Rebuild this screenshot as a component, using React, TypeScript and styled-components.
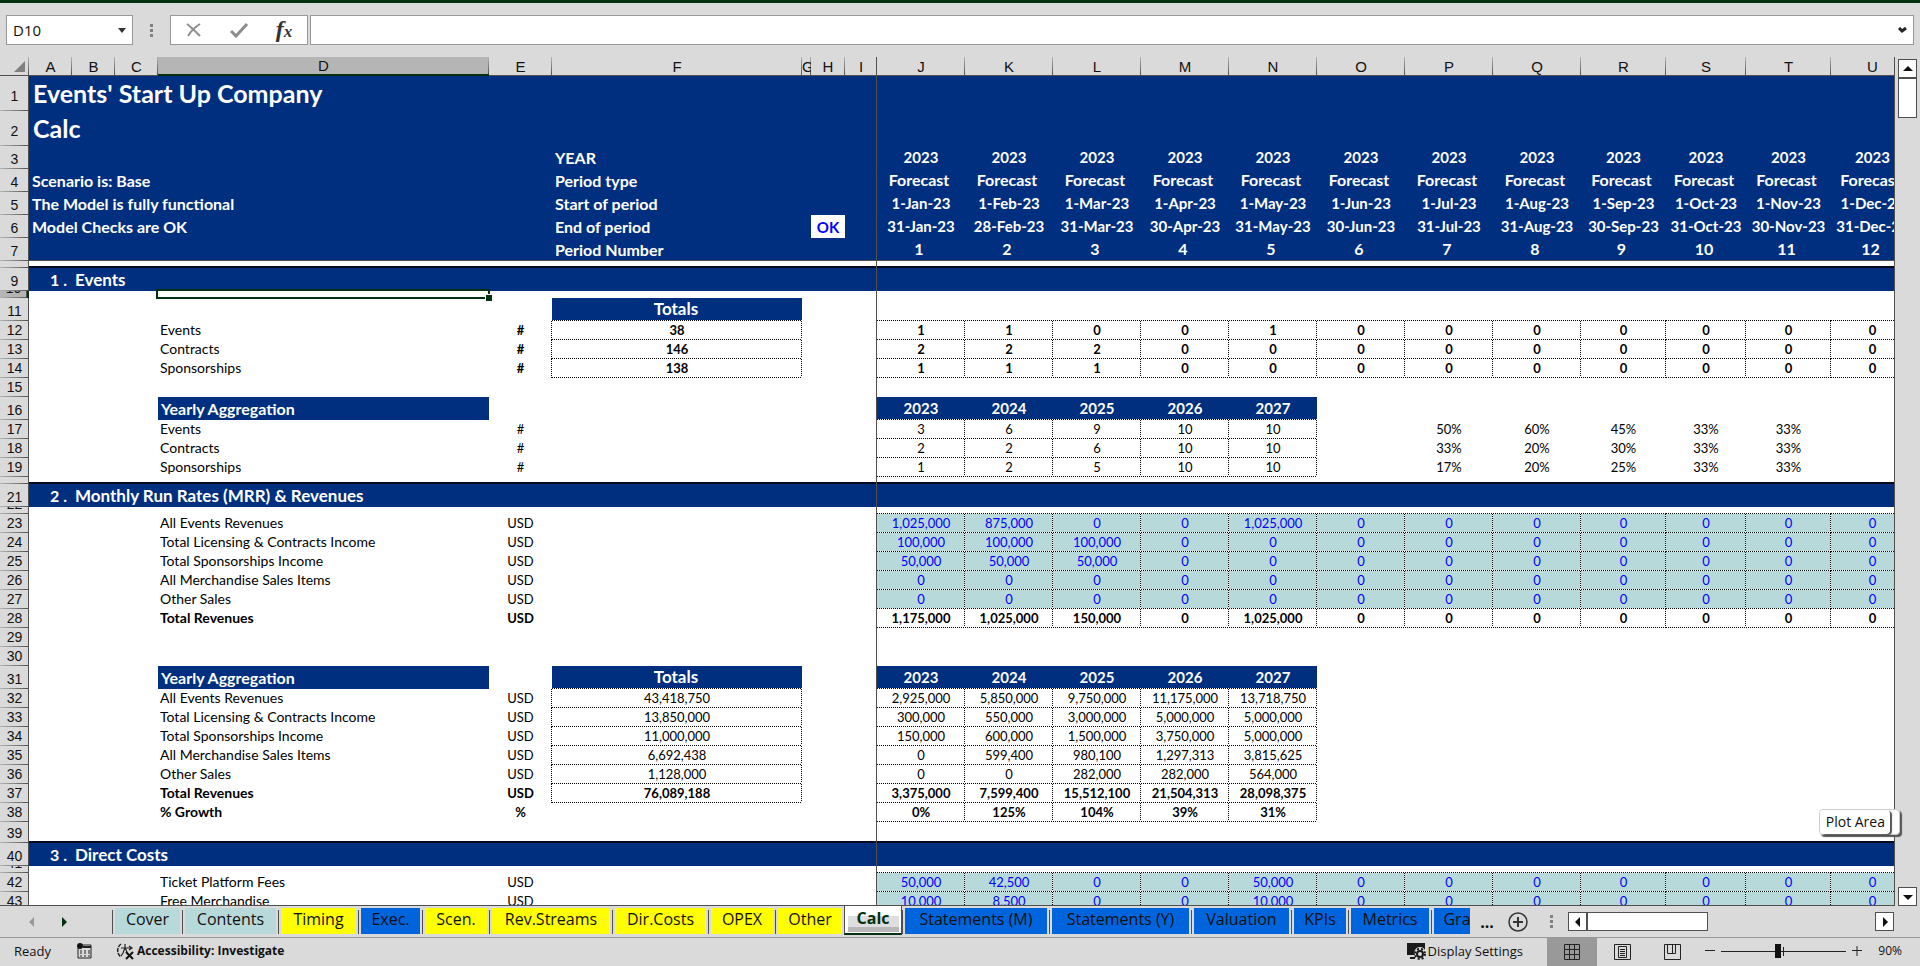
import React from 'react';
import styled, { createGlobalStyle, css } from 'styled-components';

const NAVY = '#002f7f';
const TEAL = '#b8d9da';
const CHROME = '#dadada';
const GREEN = '#03300f';
const LINE = '#505050';
const SHEET_FONT = 'Lato, "Liberation Sans", sans-serif';
const UI_FONT = '"Open Sans", "Noto Sans", sans-serif';

const GlobalStyle = createGlobalStyle`
  *, *::before, *::after { box-sizing: border-box; }
  html, body { margin: 0; background: ${CHROME}; }
  button, input { font: inherit; color: inherit; margin: 0; }
`;

const Shell = styled.div`
  display: flex;
  flex-direction: column;
  height: 100vh;
  overflow: hidden;
  border-top: 3px solid ${GREEN};
  background: ${CHROME};
  color: #111;
  font-family: ${UI_FONT};
`;

/* ---------- formula bar ---------- */

const FormulaBar = styled.div`
  display: flex;
  align-items: center;
  height: 54px;
  flex: none;
  padding: 0 6px;
`;

const fieldBox = css`
  height: 30px;
  border: 1px solid #999;
  background: #fff;
`;

const NameBox = styled.div`
  ${fieldBox}
  display: flex;
  align-items: center;
  width: 127px;
`;

const NameInput = styled.input`
  flex: 1;
  min-width: 0;
  border: 0;
  padding: 0 6px;
  background: none;
  outline: 0;
  font-size: 15px;
`;

const PlainButton = styled.button`
  display: flex;
  align-items: center;
  justify-content: center;
  border: 0;
  padding: 0;
  background: none;
`;

const NameArrow = styled(PlainButton)`
  width: 20px;
  height: 28px;
`;

const Grip = styled.div<{ $width: number }>`
  display: flex;
  flex-direction: column;
  align-items: center;
  align-self: center;
  gap: 2px;
  width: ${(p) => p.$width}px;
  flex: none;
  &::before, &::after { content: ''; }
  &::before, &::after, & > i {
    width: 3px;
    height: 3px;
    background: #808080;
  }
`;

const ActionBox = styled.div`
  ${fieldBox}
  display: flex;
  justify-content: space-evenly;
  width: 138px;
  margin-right: 2px;
`;

const ActionButton = styled(PlainButton)`
  width: 44px;
`;

const FxText = styled.span`
  font: italic bold 24px/26px "Liberation Serif", serif;
  color: #333;
  small { font-size: 17px; }
`;

const FormulaField = styled.div`
  ${fieldBox}
  display: flex;
  flex: 1;
`;

const FormulaInput = styled.input`
  flex: 1;
  border: 0;
  outline: 0;
  padding: 0 6px;
  font-size: 15px;
  background: none;
`;

const ExpandButton = styled(PlainButton)`
  width: 22px;
`;

/* ---------- sheet ---------- */

const Workspace = styled.main`
  position: relative;
  display: flex;
  flex: 1;
  min-height: 0;
`;

const Viewport = styled.div`
  flex: 1;
  min-width: 0;
  overflow: hidden;
  border-right: 1px solid ${LINE};
  border-bottom: 1px solid ${LINE};
  background: #fff;
`;

const Grid = styled.table<{ $width: number }>`
  width: ${(p) => p.$width}px;
  table-layout: fixed;
  border-collapse: separate;
  border-spacing: 0;
  font-family: ${SHEET_FONT};
  td, th { padding: 0; }
`;

const ColumnHead = styled.th<{ $active?: boolean; $freeze?: boolean }>`
  height: 19px;
  overflow: hidden;
  border-bottom: ${(p) => (p.$active ? `2px solid ${GREEN}` : `1px solid ${LINE}`)};
  background:
    linear-gradient(${(p) => (p.$freeze ? LINE : '#b4b4b4')}, ${LINE}) right / 1px 100% no-repeat,
    ${(p) => (p.$active ? '#b5b5b5' : CHROME)};
  font: 15px/17px "Liberation Sans", Arial, sans-serif;
  color: #111;
`;

const Corner = styled.th`
  border-bottom: 1px solid ${LINE};
  background: linear-gradient(#b4b4b4, ${LINE}) right / 1px 100% no-repeat, ${CHROME};
  svg { display: block; margin-left: 14px; }
`;

const RowHead = styled.th<{ $active?: boolean }>`
  background:
    linear-gradient(${LINE}, ${LINE}) right / 1px 100% no-repeat,
    linear-gradient(90deg, #b4b4b4, ${LINE}) bottom / 100% 1px no-repeat,
    ${(p) => (p.$active ? '#b5b5b5' : CHROME)};
  ${(p) => p.$active && `border-right: 2px solid ${GREEN};`}
  color: #111;
  font: 14px/14px "Liberation Sans", Arial, sans-serif;
`;

const RowHeadText = styled.div<{ $h: number }>`
  display: flex;
  align-items: flex-end;
  justify-content: center;
  height: ${(p) => p.$h}px;
  padding-bottom: ${(p) => (p.$h > 30 ? 8 : 3)}px;
  overflow: hidden;
`;

type Kind =
  | 'blank' | 'label' | 'labelBold' | 'mid' | 'midBold'
  | 'input' | 'band' | 'totals' | 'bandLabel' | 'title' | 'head' | 'headMid'
  | 'headShift' | 'sectionNo' | 'section' | 'check' | 'selected';

const small = css`
  padding-bottom: 1px;
  font-size: 13px;
`;
const strong = css`
  font-weight: bold;
  color: #fff;
`;

const kinds: Record<Kind, ReturnType<typeof css>> = {
  blank: css``,
  label: css`padding: 0 0 1px 2px; font-size: 14px;`,
  labelBold: css`padding: 0 0 1px 2px; font-size: 14px; font-weight: bold;`,
  mid: css`${small} justify-content: center;`,
  midBold: css`${small} justify-content: center; font-weight: bold;`,
  input: css`${small} justify-content: center; color: #00f;`,
  band: css`${strong} justify-content: center; font-size: 15px; padding-bottom: 3px;`,
  totals: css`${strong} justify-content: center; font-size: 17px; padding: 0 2px 3px 0;`,
  bandLabel: css`${strong} padding-left: 3px; font-size: 16px;`,
  title: css`${strong} padding: 0 0 4px 4px; font-size: 25px; line-height: 28px;`,
  head: css`${strong} padding-left: 3px; font-size: 16px;`,
  headMid: css`${strong} justify-content: center; font-size: 15px; padding-bottom: 3px;`,
  headShift: css`${strong} justify-content: center; font-size: 16px; padding: 0 4px 3px 0;`,
  sectionNo: css`${strong} justify-content: flex-end; padding-right: 5px; font-size: 16px;`,
  section: css`${strong} padding-left: 3px; font-size: 17px;`,
  check: css`justify-content: center; font-size: 15px; font-weight: bold; color: #00f;`,
  selected: css``,
};

const CellText = styled.div<{ $kind: Kind; $h: number }>`
  display: flex;
  align-items: flex-end;
  height: ${(p) => p.$h}px;
  padding-bottom: 2px;
  line-height: 18px;
  white-space: pre;
  color: #000;
  ${(p) => kinds[p.$kind]}
`;

interface CellLook {
  $fill?: string;
  $dots?: string;
  $rule?: boolean;
  $freeze?: boolean;
  $split?: boolean;
  $selected?: boolean;
}

const layers = (p: CellLook) => {
  const list: string[] = [];
  if (p.$freeze) list.push(`linear-gradient(${LINE}, ${LINE}) right / 1px 100% no-repeat`);
  if (p.$split) list.push(`linear-gradient(${LINE}, ${LINE}) bottom / 100% 1px no-repeat`);
  if (p.$rule) list.push('linear-gradient(#000a1c, #000a1c) bottom / 100% 2px no-repeat');
  if (p.$dots?.includes('b'))
    list.push('repeating-linear-gradient(90deg, #000 0 1px, #fff 1px 2px) bottom / 100% 1px no-repeat');
  if (p.$dots?.includes('r'))
    list.push('repeating-linear-gradient(#000 0 1px, #fff 1px 2px) right / 1px 100% no-repeat');
  list.push(p.$fill ?? '#fff');
  return list.join(', ');
};

const Cell = styled.td<CellLook>`
  background: ${layers};
  ${(p) =>
    p.$selected &&
    css`
      position: relative;
      &::before {
        content: '';
        position: absolute;
        inset: -2px -1px -1px -2px;
        border: 2px solid ${GREEN};
      }
      &::after {
        content: '';
        position: absolute;
        right: -3px;
        bottom: -3px;
        width: 7px;
        height: 7px;
        border: solid #fff;
        border-width: 1px 0 0 1px;
        background: ${GREEN};
      }
    `}
`;

const COLS: [string, number][] = [
  ['A', 43], ['B', 43], ['C', 43], ['D', 331], ['E', 63], ['F', 250], ['G', 9],
  ['H', 34], ['I', 32], ['J', 88], ['K', 88], ['L', 88], ['M', 88], ['N', 88],
  ['O', 88], ['P', 88], ['Q', 88], ['R', 85], ['S', 80], ['T', 85], ['U', 83],
];
const MONTHS = 'JKLMNOPQRSTU'.split('');
const YEARS = MONTHS.slice(0, 5);

interface CellSpec {
  t?: string;
  kind?: Kind;
  span?: number;
  fill?: string;
  dots?: string;
}
type Cells = Record<string, CellSpec>;

interface RowSpec {
  n: number;
  h: number;
  fill?: string;
  rule?: boolean;
  split?: boolean;
  hideNo?: boolean;
  cells?: Cells;
}

const across = (cols: string[], values: string[], spec: CellSpec): Cells =>
  Object.fromEntries(cols.map((c, i) => [c, { ...spec, t: values[i] ?? '' }]));

const months = (values: string, spec: CellSpec) => {
  const list = values.split(' ');
  while (list.length < 12) list.push('0');
  return across(MONTHS, list, spec);
};

const line = (name: string, unit: string, bold = false, unitBold = bold): Cells => ({
  D: { t: name, kind: bold ? 'labelBold' : 'label' },
  E: { t: unit, kind: unitBold ? 'midBold' : 'mid' },
});

const total = (row: Cells, value: string, bold = false): Cells => ({
  ...row,
  E: { ...row.E, dots: 'r' },
  F: { t: value, kind: bold ? 'midBold' : 'mid', dots: 'rb' },
});

const years = (values: string, bold = false) =>
  across(YEARS, values.split(' '), { kind: bold ? 'midBold' : 'mid', dots: 'rb' });

const section = (no: string, name: string): Cells => ({
  A: { t: `${no} .`, kind: 'sectionNo' },
  B: { t: name, kind: 'section', span: 8 },
});

const yearBand = across(YEARS, ['2023', '2024', '2025', '2026', '2027'], { kind: 'band', fill: NAVY, dots: 'b' });
const yearly: CellSpec = { t: 'Yearly Aggregation', kind: 'bandLabel', fill: NAVY };
const totals: CellSpec = { t: 'Totals', kind: 'totals', fill: NAVY, dots: 'b' };
const openTop = across(MONTHS, [], { dots: 'b' });
const white: CellSpec = { kind: 'headMid' };
const inputCell: CellSpec = { kind: 'input', fill: TEAL, dots: 'rb' };
const boldCell: CellSpec = { kind: 'midBold', dots: 'rb' };
const shares = (values: string) => across(['P', 'Q', 'R', 'S', 'T'], values.split(' '), { kind: 'mid' });

const names = ['Jan', 'Feb', 'Mar', 'Apr', 'May', 'Jun', 'Jul', 'Aug', 'Sep', 'Oct', 'Nov', 'Dec'];
const ends = [31, 28, 31, 30, 31, 30, 31, 31, 30, 31, 30, 31];

const ROWS: RowSpec[] = [
  { n: 1, h: 35, fill: NAVY, cells: { A: { t: "Events' Start Up Company", kind: 'title', span: 5 } } },
  { n: 2, h: 35, fill: NAVY, cells: { A: { t: 'Calc', kind: 'title', span: 5 } } },
  {
    n: 3, h: 23, fill: NAVY,
    cells: { F: { t: 'YEAR', kind: 'head' }, ...across(MONTHS, MONTHS.map(() => '2023'), white) },
  },
  {
    n: 4, h: 23, fill: NAVY,
    cells: {
      A: { t: 'Scenario is: Base', kind: 'head', span: 5 },
      F: { t: 'Period type', kind: 'head' },
      ...across(MONTHS, MONTHS.map(() => 'Forecast'), { kind: 'headShift' }),
    },
  },
  {
    n: 5, h: 23, fill: NAVY,
    cells: {
      A: { t: 'The Model is fully functional', kind: 'head', span: 5 },
      F: { t: 'Start of period', kind: 'head' },
      ...across(MONTHS, names.map((m) => `1-${m}-23`), white),
    },
  },
  {
    n: 6, h: 23, fill: NAVY,
    cells: {
      A: { t: 'Model Checks are OK', kind: 'head', span: 5 },
      F: { t: 'End of period', kind: 'head' },
      H: { t: 'OK', kind: 'check', fill: '#fff' },
      ...across(MONTHS, names.map((m, i) => `${ends[i]}-${m}-23`), white),
    },
  },
  {
    n: 7, h: 23, fill: NAVY, split: true,
    cells: {
      F: { t: 'Period Number', kind: 'head' },
      ...across(MONTHS, names.map((_, i) => `${i + 1}`), { kind: 'headShift' }),
    },
  },
  { n: 8, h: 7, rule: true, hideNo: true },
  { n: 9, h: 23, fill: NAVY, cells: section('1', 'Events') },
  { n: 10, h: 7, cells: { D: { kind: 'selected' } } },
  { n: 11, h: 23, cells: { F: totals, ...openTop } },
  { n: 12, h: 19, cells: { ...total(line('Events', '#', false, true), '38', true), ...months('1 1 0 0 1', boldCell) } },
  { n: 13, h: 19, cells: { ...total(line('Contracts', '#', false, true), '146', true), ...months('2 2 2', boldCell) } },
  { n: 14, h: 19, cells: { ...total(line('Sponsorships', '#', false, true), '138', true), ...months('1 1 1', boldCell) } },
  { n: 15, h: 19 },
  { n: 16, h: 23, cells: { D: yearly, ...yearBand } },
  { n: 17, h: 19, cells: { ...line('Events', '#'), ...years('3 6 9 10 10'), ...shares('50% 60% 45% 33% 33%') } },
  { n: 18, h: 19, cells: { ...line('Contracts', '#'), ...years('2 2 6 10 10'), ...shares('33% 20% 30% 33% 33%') } },
  { n: 19, h: 19, cells: { ...line('Sponsorships', '#'), ...years('1 2 5 10 10'), ...shares('17% 20% 25% 33% 33%') } },
  { n: 20, h: 7, rule: true, hideNo: true },
  { n: 21, h: 23, fill: NAVY, cells: section('2', 'Monthly Run Rates (MRR) & Revenues') },
  { n: 22, h: 7, cells: openTop },
  { n: 23, h: 19, cells: { ...line('All Events Revenues', 'USD'), ...months('1,025,000 875,000 0 0 1,025,000', inputCell) } },
  { n: 24, h: 19, cells: { ...line('Total Licensing & Contracts Income', 'USD'), ...months('100,000 100,000 100,000', inputCell) } },
  { n: 25, h: 19, cells: { ...line('Total Sponsorships Income', 'USD'), ...months('50,000 50,000 50,000', inputCell) } },
  { n: 26, h: 19, cells: { ...line('All Merchandise Sales Items', 'USD'), ...months('0', inputCell) } },
  { n: 27, h: 19, cells: { ...line('Other Sales', 'USD'), ...months('0', inputCell) } },
  { n: 28, h: 19, cells: { ...line('Total Revenues', 'USD', true), ...months('1,175,000 1,025,000 150,000 0 1,025,000', boldCell) } },
  { n: 29, h: 19 },
  { n: 30, h: 19 },
  { n: 31, h: 23, cells: { D: yearly, F: totals, ...yearBand } },
  { n: 32, h: 19, cells: { ...total(line('All Events Revenues', 'USD'), '43,418,750'), ...years('2,925,000 5,850,000 9,750,000 11,175,000 13,718,750') } },
  { n: 33, h: 19, cells: { ...total(line('Total Licensing & Contracts Income', 'USD'), '13,850,000'), ...years('300,000 550,000 3,000,000 5,000,000 5,000,000') } },
  { n: 34, h: 19, cells: { ...total(line('Total Sponsorships Income', 'USD'), '11,000,000'), ...years('150,000 600,000 1,500,000 3,750,000 5,000,000') } },
  { n: 35, h: 19, cells: { ...total(line('All Merchandise Sales Items', 'USD'), '6,692,438'), ...years('0 599,400 980,100 1,297,313 3,815,625') } },
  { n: 36, h: 19, cells: { ...total(line('Other Sales', 'USD'), '1,128,000'), ...years('0 0 282,000 282,000 564,000') } },
  { n: 37, h: 19, cells: { ...total(line('Total Revenues', 'USD', true), '76,089,188', true), ...years('3,375,000 7,599,400 15,512,100 21,504,313 28,098,375', true) } },
  { n: 38, h: 19, cells: { ...line('% Growth', '%', true), ...years('0% 125% 104% 39% 31%', true) } },
  { n: 39, h: 21, rule: true },
  { n: 40, h: 23, fill: NAVY, cells: section('3', 'Direct Costs') },
  { n: 41, h: 7, cells: openTop },
  { n: 42, h: 19, cells: { ...line('Ticket Platform Fees', 'USD'), ...months('50,000 42,500 0 0 50,000', inputCell) } },
  { n: 43, h: 19, cells: { ...line('Free Merchandise', 'USD'), ...months('10,000 8,500 0 0 10,000', inputCell) } },
];

function SheetRow({ row }: { row: RowSpec }) {
  const cells: React.ReactNode[] = [];
  for (let i = 0; i < COLS.length; ) {
    const col = COLS[i][0];
    const spec = row.cells?.[col] ?? {};
    const span = spec.span ?? 1;
    const last = COLS[i + span - 1][0];
    cells.push(
      <Cell
        key={col}
        colSpan={span}
        $fill={spec.fill ?? row.fill}
        $dots={spec.dots}
        $rule={row.rule}
        $split={row.split}
        $freeze={last === 'I'}
        $selected={spec.kind === 'selected'}
      >
        {spec.t ? <CellText $kind={spec.kind ?? 'blank'} $h={row.h}>{spec.t}</CellText> : null}
      </Cell>,
    );
    i += span;
  }
  return (
    <tr>
      <RowHead scope="row" $active={row.n === 10}>
        <RowHeadText $h={row.h}>{row.hideNo ? '' : row.n}</RowHeadText>
      </RowHead>
      {cells}
    </tr>
  );
}

/* ---------- scroll bars ---------- */

const VerticalBar = styled.div`
  display: flex;
  flex-direction: column;
  align-items: center;
  width: 25px;
  flex: none;
  padding-top: 2px;
`;

const ScrollButton = styled(PlainButton)`
  width: 19px;
  height: 19px;
  flex: none;
  border: 1px solid ${LINE};
  background: #fff;
`;

const VerticalThumb = styled.div`
  width: 19px;
  height: 40px;
  border: 1px solid ${LINE};
  background: #fff;
`;

const Spacer = styled.div`
  flex: 1;
`;

const TipStack = styled.div`
  position: absolute;
  right: 20px;
  bottom: 71px;
  padding-right: 9px;
  border: 1px solid #ccc;
  border-radius: 4px;
  background: #fff;
  box-shadow: 2px 2px 1px #555;
`;

const Tip = styled.div`
  height: 24px;
  padding: 0 5px 0 6px;
  border-radius: 4px;
  background: #fff;
  box-shadow: 2px 1px 1px #555;
  font-size: 14px;
  line-height: 24px;
  white-space: nowrap;
`;

/* ---------- sheet tabs ---------- */

const TabBar = styled.nav`
  display: flex;
  height: 32px;
  flex: none;
  border-bottom: 1px solid #999;
`;

const TabNav = styled.div`
  display: flex;
  align-items: center;
  justify-content: flex-end;
  width: 112px;
  flex: none;
  padding-right: 38px;
`;

const TabNavButton = styled(PlainButton)`
  width: 20px;
  height: 24px;
  margin-left: 12px;
`;

const TabStrip = styled.div`
  display: flex;
  flex: 0 1 1358px;
  min-width: 0;
  overflow: hidden;
`;

const TabSlot = styled.div`
  flex: none;
  padding: 2px 2px 3px 3px;
  background: linear-gradient(${LINE}, ${LINE}) 0 4px / 1px 24px no-repeat;
`;

const Tab = styled.button<{ $color: string; $width: number }>`
  display: block;
  width: ${(p) => p.$width}px;
  height: 26px;
  border: 0;
  padding: 0 0 4px;
  background: ${(p) => p.$color};
  color: #111;
  font-size: 16px;
  line-height: 22px;
  white-space: nowrap;
`;

const ActiveTab = styled.button`
  width: 58px;
  height: 29px;
  flex: none;
  border: 0;
  border-left: 1px solid ${LINE};
  border-right: 1px solid ${LINE};
  border-bottom: 2px solid ${GREEN};
  padding: 0 0 3px;
  background:
    linear-gradient(#dedede 0 11px, #b8b8b8 11px 16px) center 10px / 51px 16px no-repeat, #fff;
  color: ${GREEN};
  font-size: 16px;
  line-height: 22px;
  font-weight: bold;
`;

const MoreTabs = styled(PlainButton)`
  width: 34px;
  font-size: 16px;
  font-weight: bold;
`;

const AddSheet = styled(PlainButton)`
  width: 24px;
  margin: 0 14px 0 2px;
`;

const HorizontalBar = styled.div`
  display: flex;
  align-items: center;
  flex: 1;
  margin: 0 26px 0 10px;
`;

const HorizontalThumb = styled.div`
  width: 121px;
  height: 19px;
  border: 1px solid ${LINE};
  background: #fff;
`;

/* ---------- status bar ---------- */

const StatusBar = styled.footer`
  display: flex;
  align-items: center;
  height: 28px;
  flex: none;
  padding: 0 18px 2px 14px;
  font-size: 13px;
  line-height: 18px;
  white-space: nowrap;
`;

const Ready = styled.span`
  width: 62px;
`;

const StatusButton = styled(PlainButton)<{ $strong?: boolean }>`
  gap: 2px;
  font-size: ${(p) => (p.$strong ? 12 : 13)}px;
  font-weight: ${(p) => (p.$strong ? 'bold' : 'normal')};
`;

const RecordButton = styled(StatusButton)`
  margin-right: 23px;
`;

const ViewButtons = styled.div`
  display: flex;
  align-self: stretch;
  margin: 0 8px -2px 24px;
`;

const ViewButton = styled(PlainButton)<{ $on?: boolean }>`
  width: 50px;
  background: ${(p) => (p.$on ? '#999' : 'none')};
`;

const ZoomRange = styled.input`
  appearance: none;
  width: 125px;
  height: 16px;
  margin: 0 6px;
  background:
    linear-gradient(#222, #222) 62px 4px / 1px 9px no-repeat,
    linear-gradient(#222, #222) 0 8px / 100% 1px no-repeat;
  &::-webkit-slider-thumb {
    appearance: none;
    width: 6px;
    height: 14px;
    background: #111;
  }
`;

const ZoomText = styled.span`
  width: 40px;
  font-size: 12px;
  text-align: right;
`;

const Arrow = ({ dir, color = '#111' }: { dir: 'up' | 'down' | 'left' | 'right'; color?: string }) => {
  const d = {
    up: 'M1 8L6 3L11 8Z',
    down: 'M1 4L6 9L11 4Z',
    left: 'M8 1L3 6L8 11Z',
    right: 'M4 1L9 6L4 11Z',
  }[dir];
  return (
    <svg width="12" height="12" viewBox="0 0 12 12" aria-hidden="true">
      <path d={d} fill={color} />
    </svg>
  );
};

const BLUE = '#0064dc';
const YELLOW = '#ffff00';
const TABS_BEFORE: [string, string, number][] = [
  ['Cover', TEAL, 65], ['Contents', TEAL, 91], ['Timing', YELLOW, 75], ['Exec.', BLUE, 59],
  ['Scen.', YELLOW, 62], ['Rev.Streams', YELLOW, 118], ['Dir.Costs', YELLOW, 91],
  ['OPEX', YELLOW, 62], ['Other', YELLOW, 64],
];
const TABS_AFTER: [string, string, number][] = [
  ['Statements (M)', BLUE, 142], ['Statements (Y)', BLUE, 137], ['Valuation', BLUE, 95],
  ['KPIs', BLUE, 52], ['Metrics', BLUE, 78], ['Gra', BLUE, 46],
];

const SheetTab = ({ tab: [name, color, width] }: { tab: [string, string, number] }) => (
  <TabSlot>
    <Tab $color={color} $width={width}>{name}</Tab>
  </TabSlot>
);

export default function App() {
  const tableWidth = 29 + COLS.reduce((sum, [, w]) => sum + w, 0);
  return (
    <Shell>
      <GlobalStyle />
      <FormulaBar>
        <NameBox>
          <NameInput aria-label="Name box" defaultValue="D10" />
          <NameArrow aria-label="Open name list">
            <svg width="8" height="5" viewBox="0 0 8 5"><path d="M0 0H8L4 5Z" fill="#333" /></svg>
          </NameArrow>
        </NameBox>
        <Grip $width={37}><i /></Grip>
        <ActionBox>
          <ActionButton aria-label="Cancel">
            <svg width="18" height="16" viewBox="0 0 18 16">
              <path d="M2 2C6 5 11 10 15 14M15 2C10 5 6 9 3 14" fill="none" stroke="#8c8c8c" strokeWidth="2" />
            </svg>
          </ActionButton>
          <ActionButton aria-label="Enter">
            <svg width="19" height="16" viewBox="0 0 19 16">
              <path d="M1 9L6 14L17 2" fill="none" stroke="#8c8c8c" strokeWidth="3" />
            </svg>
          </ActionButton>
          <ActionButton aria-label="Insert function">
            <FxText>f<small>x</small></FxText>
          </ActionButton>
        </ActionBox>
        <FormulaField>
          <FormulaInput aria-label="Formula" />
          <ExpandButton aria-label="Expand formula bar">
            <svg width="9" height="7" viewBox="0 0 9 7">
              <path d="M1 1L4 4L8 1" fill="none" stroke="#222" strokeWidth="3" />
            </svg>
          </ExpandButton>
        </FormulaField>
      </FormulaBar>

      <Workspace>
        <Viewport>
          <Grid $width={tableWidth}>
            <colgroup>
              <col width={29} />
              {COLS.map(([name, width]) => <col key={name} width={width} />)}
            </colgroup>
            <thead>
              <tr>
                <Corner aria-label="Select all">
                  <svg width="11" height="11" viewBox="0 0 11 11"><path d="M11 0V11H0Z" fill="#808080" /></svg>
                </Corner>
                {COLS.map(([name]) => (
                  <ColumnHead key={name} scope="col" $active={name === 'D'} $freeze={name === 'I'}>{name}</ColumnHead>
                ))}
              </tr>
            </thead>
            <tbody>
              {ROWS.map((row) => <SheetRow key={row.n} row={row} />)}
            </tbody>
          </Grid>
        </Viewport>
        <VerticalBar>
          <ScrollButton aria-label="Scroll up"><Arrow dir="up" /></ScrollButton>
          <VerticalThumb />
          <Spacer />
          <ScrollButton aria-label="Scroll down"><Arrow dir="down" /></ScrollButton>
        </VerticalBar>
        <TipStack role="tooltip"><Tip>Plot Area</Tip></TipStack>
      </Workspace>

      <TabBar>
        <TabNav>
          <TabNavButton aria-label="Previous sheets"><Arrow dir="left" color="#999" /></TabNavButton>
          <TabNavButton aria-label="Next sheets"><Arrow dir="right" color={GREEN} /></TabNavButton>
        </TabNav>
        <TabStrip>
          {TABS_BEFORE.map((tab) => <SheetTab key={tab[0]} tab={tab} />)}
          <ActiveTab>Calc</ActiveTab>
          {TABS_AFTER.map((tab) => <SheetTab key={tab[0]} tab={tab} />)}
        </TabStrip>
        <MoreTabs aria-label="More sheets">...</MoreTabs>
        <AddSheet aria-label="New sheet">
          <svg width="22" height="22" viewBox="0 0 22 22">
            <circle cx="11" cy="11" r="9" fill="none" stroke="#333" strokeWidth="1.5" />
            <path d="M11 6V16M6 11H16" stroke="#333" strokeWidth="2" />
          </svg>
        </AddSheet>
        <Grip $width={14}><i /></Grip>
        <HorizontalBar>
          <ScrollButton aria-label="Scroll left"><Arrow dir="left" /></ScrollButton>
          <HorizontalThumb />
          <Spacer />
          <ScrollButton aria-label="Scroll right"><Arrow dir="right" /></ScrollButton>
        </HorizontalBar>
      </TabBar>

      <StatusBar>
        <Ready>Ready</Ready>
        <RecordButton aria-label="Record macro">
          <svg width="16" height="16" viewBox="0 0 16 16">
            <path d="M2 5V15H15V2H6" fill="none" stroke="#222" />
            <path d="M7 3H15V5H7Z" fill="#222" />
            <path d="M4 8H6M8 8H10M12 8H14M4 10H6M8 10H10M12 10H14M4 13H6M8 13H10M12 13H14" stroke="#222" />
            <circle cx="4" cy="3" r="3" fill="#111" />
          </svg>
        </RecordButton>
        <StatusButton $strong>
          <svg width="20" height="18" viewBox="0 0 20 18">
            <path d="M6 2A8 8 0 0 0 6 15" fill="none" stroke="#222" strokeWidth="1.5" strokeDasharray="4 1" />
            <path d="M6 6H17M14 4L17 6L14 8M10 2V6L8 11L6 14M10 6L12 10" fill="none" stroke="#222" strokeWidth="1.2" />
            <path d="M11 10L18 17M18 10L11 17" stroke="#111" strokeWidth="2" />
          </svg>
          Accessibility: Investigate
        </StatusButton>
        <Spacer />
        <StatusButton>
          <svg width="19" height="18" viewBox="0 0 19 18">
            <path d="M0 1H18V8A5 5 0 0 0 8 13H0Z" fill="#1a1a1a" />
            <path d="M3 15H8V17H3Z" fill="#1a1a1a" />
            <circle cx="13" cy="12" r="3" fill="none" stroke="#1a1a1a" strokeWidth="2" />
            <circle cx="13" cy="12" r="5" fill="none" stroke="#1a1a1a" strokeWidth="2" strokeDasharray="2 2" />
          </svg>
          Display Settings
        </StatusButton>
        <ViewButtons>
          <ViewButton $on aria-label="Normal view">
            <svg width="16" height="16" viewBox="0 0 16 16">
              <path d="M.5.5H15.5V15.5H.5ZM5.5.5V15.5M10.5.5V15.5M.5 5.5H15.5M.5 10.5H15.5" fill="none" stroke="#222" />
            </svg>
          </ViewButton>
          <ViewButton aria-label="Page layout view">
            <svg width="17" height="16" viewBox="0 0 17 16">
              <path d="M.5.5H16.5V15.5H.5ZM4.5 2.5H12.5V13.5H4.5ZM6 5.5H11M6 7.5H11M6 9.5H11M6 11.5H11" fill="none" stroke="#222" />
            </svg>
          </ViewButton>
          <ViewButton aria-label="Page break preview">
            <svg width="17" height="16" viewBox="0 0 17 16">
              <path d="M.5.5H16.5V15.5H.5ZM3.5.5V9.5H11.5V.5M8.5.5V9.5" fill="none" stroke="#222" />
            </svg>
          </ViewButton>
        </ViewButtons>
        <PlainButton aria-label="Zoom out">
          <svg width="10" height="10" viewBox="0 0 10 10"><path d="M0 4.5H10" stroke="#222" /></svg>
        </PlainButton>
        <ZoomRange type="range" min={0} max={100} defaultValue={45} aria-label="Zoom" />
        <PlainButton aria-label="Zoom in">
          <svg width="10" height="10" viewBox="0 0 10 10"><path d="M0 4.5H10M5 0V10" stroke="#222" /></svg>
        </PlainButton>
        <ZoomText>90%</ZoomText>
      </StatusBar>
    </Shell>
  );
}
